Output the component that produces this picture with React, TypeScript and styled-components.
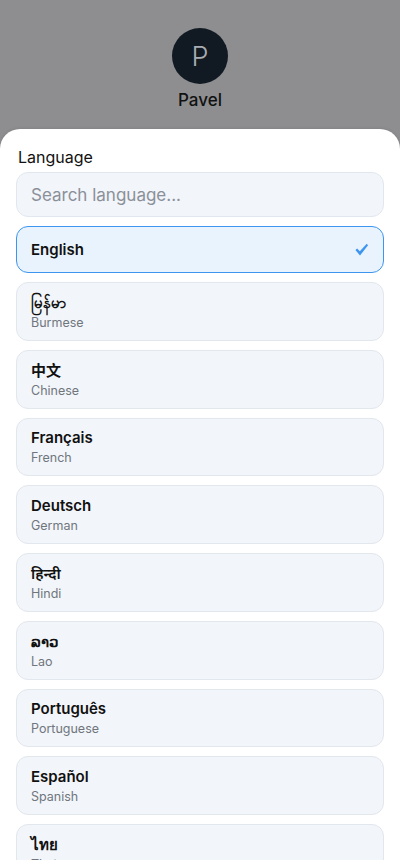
import React from "react"
import styled, { createGlobalStyle } from "styled-components"

const GlobalStyle = createGlobalStyle`
    html, body {
        margin: 0;
        padding: 0;
        background: #8e8e90;
        font-family: Inter, "Noto Sans", "Noto Sans CJK SC", sans-serif;
        -webkit-font-smoothing: antialiased;
    }
`

const Screen = styled.div`
    width: 400px;
    height: 860px;
    overflow: hidden;
    display: flex;
    flex-direction: column;
    background: #8e8e90;
`

const Profile = styled.div`
    display: flex;
    flex-direction: column;
    align-items: center;
    padding-top: 28px;
    height: 129px;
    box-sizing: border-box;
    flex-shrink: 0;
`

const Avatar = styled.div`
    width: 56px;
    height: 56px;
    flex-shrink: 0;
    border-radius: 50%;
    background: #111a22;
    color: #a9adb3;
    display: flex;
    align-items: center;
    justify-content: center;
    font-size: 27px;
    font-weight: 300;
`

const Name = styled.div`
    margin-top: 5px;
    font-size: 17px;
    font-weight: 500;
    color: #111;
    line-height: 22px;
`

const Sheet = styled.div`
    flex: 1;
    min-height: 0;
    overflow: hidden;
    background: #fff;
    border-radius: 20px 20px 0 0;
    box-shadow: 0 -1px 3px rgba(0, 0, 0, 0.08);
    padding: 18px 16px 0;
    display: flex;
    flex-direction: column;
`

const Label = styled.div`
    font-size: 16px;
    color: #111;
    line-height: 20px;
    padding-left: 2px;
    margin-bottom: 5px;
`

const Search = styled.input`
    height: 45px;
    flex-shrink: 0;
    box-sizing: border-box;
    border: 1px solid #e1e7ef;
    border-radius: 12px;
    background: #f2f5f9;
    padding: 0 14px;
    font-family: inherit;
    font-size: 17px;
    color: #111;
    margin-bottom: 9px;
    outline: none;

    &::placeholder {
        color: #8a9099;
    }
`

const List = styled.div`
    display: flex;
    flex-direction: column;
    gap: 9px;
`

const Option = styled.div<{ $active?: boolean }>`
    display: flex;
    align-items: center;
    justify-content: space-between;
    box-sizing: border-box;
    border-radius: 12px;
    border: 1px solid ${p => (p.$active ? "#3d95f0" : "#e2e7ee")};
    background: ${p => (p.$active ? "#e8f3fd" : "#f2f5f9")};
    padding: ${p => (p.$active ? "0 14px" : "9px 14px 8px")};
    height: ${p => (p.$active ? "47px" : "58.75px")};
    flex-shrink: 0;
`

const Texts = styled.div`
    display: flex;
    flex-direction: column;
`

const Native = styled.div`
    font-size: 15px;
    font-weight: 600;
    color: #111;
    line-height: 22px;
`

const English = styled.div`
    font-size: 12.5px;
    color: #70767e;
    line-height: 18px;
`

const Check = styled.svg`
    width: 15px;
    height: 15px;
    color: #3d95f0;
`

const languages = [
    { native: "English", name: "" },
    { native: "မြန်မာ", name: "Burmese" },
    { native: "中文", name: "Chinese" },
    { native: "Français", name: "French" },
    { native: "Deutsch", name: "German" },
    { native: "हिन्दी", name: "Hindi" },
    { native: "ລາວ", name: "Lao" },
    { native: "Português", name: "Portuguese" },
    { native: "Español", name: "Spanish" },
    { native: "ไทย", name: "Thai" },
]

export default function App() {
    const selected = "English"
    return (
        <Screen>
            <GlobalStyle />
            <Profile>
                <Avatar>P</Avatar>
                <Name>Pavel</Name>
            </Profile>
            <Sheet>
                <Label>Language</Label>
                <Search placeholder="Search language..." />
                <List>
                    {languages.map(l => {
                        const active = l.native === selected
                        return (
                            <Option key={l.native} $active={active}>
                                <Texts>
                                    <Native>{l.native}</Native>
                                    {!active && <English>{l.name}</English>}
                                </Texts>
                                {active && (
                                    <Check viewBox="0 0 16 16">
                                        {/* heavy tick, thin at the foot, thick on the long stroke */}
                                        <path
                                            d="M1.5 8.6 L3.4 7 L6.2 9.9 L13.6 1.8 L15 3.4 L6.4 14.4 Z"
                                            fill="currentColor"
                                        />
                                    </Check>
                                )}
                            </Option>
                        )
                    })}
                </List>
            </Sheet>
        </Screen>
    )
}
